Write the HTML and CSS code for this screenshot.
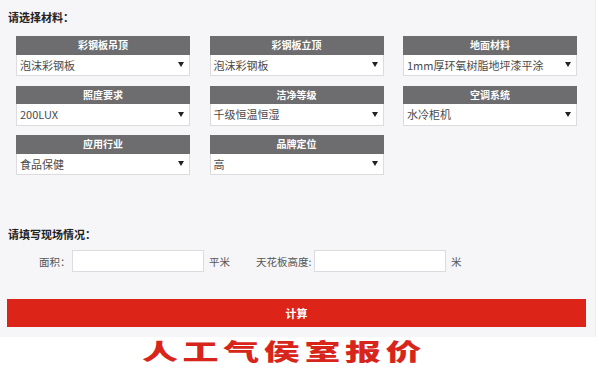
FILE: index.html
```html
<!DOCTYPE html>
<html lang="zh">
<head>
<meta charset="utf-8">
<link rel="stylesheet" href="styles.css">
</head>
<body>
<div class="panel">
  <div class="heading">请选择材料：</div>
  <div class="grid">
    <div class="card"><div class="card-head">彩钢板吊顶</div><div class="select"><span>泡沫彩钢板</span><svg class="arrow" width="6" height="5" viewBox="0 0 6 5"><path d="M0 0H6L3 5Z"/></svg></div></div>
    <div class="card"><div class="card-head">彩钢板立顶</div><div class="select"><span>泡沫彩钢板</span><svg class="arrow" width="6" height="5" viewBox="0 0 6 5"><path d="M0 0H6L3 5Z"/></svg></div></div>
    <div class="card"><div class="card-head">地面材料</div><div class="select"><span>1mm厚环氧树脂地坪漆平涂</span><svg class="arrow" width="6" height="5" viewBox="0 0 6 5"><path d="M0 0H6L3 5Z"/></svg></div></div>
    <div class="card"><div class="card-head">照度要求</div><div class="select"><span>200LUX</span><svg class="arrow" width="6" height="5" viewBox="0 0 6 5"><path d="M0 0H6L3 5Z"/></svg></div></div>
    <div class="card"><div class="card-head">洁净等级</div><div class="select"><span>千级恒温恒湿</span><svg class="arrow" width="6" height="5" viewBox="0 0 6 5"><path d="M0 0H6L3 5Z"/></svg></div></div>
    <div class="card"><div class="card-head">空调系统</div><div class="select"><span>水冷柜机</span><svg class="arrow" width="6" height="5" viewBox="0 0 6 5"><path d="M0 0H6L3 5Z"/></svg></div></div>
    <div class="card"><div class="card-head">应用行业</div><div class="select"><span>食品保健</span><svg class="arrow" width="6" height="5" viewBox="0 0 6 5"><path d="M0 0H6L3 5Z"/></svg></div></div>
    <div class="card"><div class="card-head">品牌定位</div><div class="select"><span>高</span><svg class="arrow" width="6" height="5" viewBox="0 0 6 5"><path d="M0 0H6L3 5Z"/></svg></div></div>
  </div>
  <div class="heading heading-2">请填写现场情况：</div>
  <div class="fields">
    <span class="label label-area">面积：</span>
    <div class="input"></div>
    <span class="unit unit-1">平米</span>
    <span class="label label-height">天花板高度:</span>
    <div class="input"></div>
    <span class="unit">米</span>
  </div>
  <div class="button">计算</div>
</div>
<div class="title-row"><span class="title">人工气侯室报价</span></div>
</body>
</html>
```

FILE: styles.css
```css
* { box-sizing: border-box; }
body {
  margin: 0;
  background: #ffffff;
  font-family: "Noto Sans CJK SC", "Noto Sans", sans-serif;
  color: #444;
}
.panel {
  width: 596px;
  height: 337px;
  background: #f6f5f8;
  border-right: 1px solid #ecebf0;
  padding: 10px 0 0 7px;
}
.heading {
  font-size: 11px;
  font-weight: bold;
  line-height: 14px;
  height: 14px;
  color: #222;
  padding-left: 1px;
}
.grid {
  margin: 12px 0 0 9px;
  display: grid;
  grid-template-columns: repeat(3, 174px);
  column-gap: 19.5px;
  row-gap: 9.5px;
}
.card {
  height: 40px;
  display: flex;
  flex-direction: column;
}
.card-head {
  height: 18.5px;
  background: #6d6c6e;
  color: #fff;
  font-size: 10px;
  font-weight: bold;
  text-align: center;
  line-height: 18.5px;
}
.select {
  flex: 1;
  background: #fff;
  border: 1px solid #dcdbe0;
  border-top: none;
  display: flex;
  align-items: center;
  justify-content: space-between;
  padding: 0 5px 0 3px;
  font-size: 11px;
  color: #4a4a4a;
}
.arrow { fill: #222; }
.heading-2 { margin-top: 52px; }
.fields {
  margin-top: 9px;
  height: 22px;
  display: flex;
  align-items: center;
  font-size: 10.5px;
  color: #555;
  white-space: nowrap;
}
.label-area { margin-left: 32px; width: 33px; }
.input {
  flex-shrink: 0;
  width: 132px;
  height: 22px;
  background: #fff;
  border: 1px solid #dcdbe0;
}
.unit { margin-left: 5px; }
.unit-1 { width: 47px; }
.label-height { width: 58px; flex-shrink: 0; }
.button {
  margin-top: 27px;
  width: 579px;
  height: 28px;
  background: #dc2418;
  color: #fff;
  font-size: 11px;
  font-weight: bold;
  text-align: center;
  line-height: 28px;
}
.title-row {
  padding: 2px 0 0 142px;
  height: 34px;
}
.title {
  display: inline-block;
  font-size: 36px;
  font-weight: 900;
  line-height: 36px;
  color: #d7251b;
  letter-spacing: 4.6px;
  transform: scaleY(0.62);
  transform-origin: 0 0;
  font-family: "Noto Sans CJK SC", sans-serif;
}
```
